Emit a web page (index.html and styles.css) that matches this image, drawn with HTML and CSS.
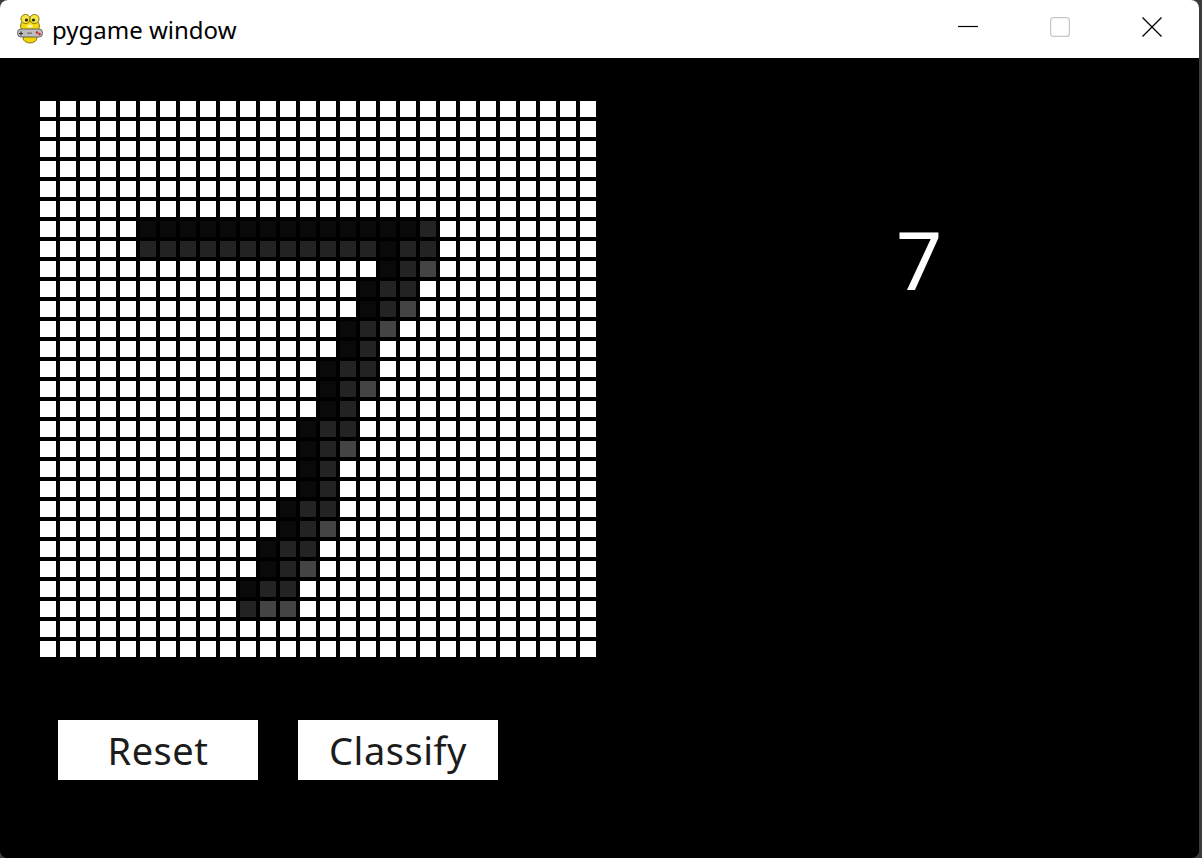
FILE: index.html
```html
<!DOCTYPE html>
<html>
<head>
<meta charset="utf-8">
<title>pygame window</title>
<link rel="stylesheet" href="styles.css">
</head>
<body>
<div class="window">
  <div class="titlebar">
    <svg class="app-icon" width="28" height="32" viewBox="0 0 28 32">
      <ellipse cx="14" cy="26" rx="7" ry="5" fill="#f2d400" stroke="#6b5a00" stroke-width="0.8"/>
      <ellipse cx="14" cy="14" rx="9.5" ry="7.5" fill="#f5da10" stroke="#6b5a00" stroke-width="0.8"/>
      <circle cx="9.5" cy="7" r="4.6" fill="#f8e640" stroke="#6b5a00" stroke-width="0.8"/>
      <circle cx="18.5" cy="7" r="4.6" fill="#f8e640" stroke="#6b5a00" stroke-width="0.8"/>
      <circle cx="10.5" cy="8" r="1.6" fill="#222"/>
      <circle cx="17.5" cy="8" r="1.6" fill="#222"/>
      <ellipse cx="14" cy="14" rx="3" ry="1.6" fill="#fff7a8"/>
      <rect x="1.5" y="17" width="25" height="8" rx="3.5" fill="#bdbdbd" stroke="#4a4a4a" stroke-width="0.8"/>
      <path d="M5 19.5v4M3 21.5h4" stroke="#333" stroke-width="1.2"/>
      <circle cx="21" cy="20.5" r="1.2" fill="#d21e1e"/>
      <circle cx="23.5" cy="22" r="1.2" fill="#d21e1e"/>
      <rect x="11" y="20.5" width="5" height="1.4" fill="#777"/>
    </svg>
    <span class="title">pygame window</span>
    <div class="controls">
      <div class="ctrl">
        <svg width="20" height="20" viewBox="0 0 20 20"><path d="M0 9.5h20" stroke="#000" stroke-width="1.2"/></svg>
      </div>
      <div class="ctrl">
        <svg width="20" height="20" viewBox="0 0 20 20"><rect x="0.6" y="0.6" width="18.8" height="18.8" rx="3" fill="none" stroke="#c6c6c6" stroke-width="1.2"/></svg>
      </div>
      <div class="ctrl">
        <svg width="20" height="20" viewBox="0 0 20 20"><path d="M0.5 0.5L19.5 19.5M19.5 0.5L0.5 19.5" stroke="#000" stroke-width="1.3"/></svg>
      </div>
    </div>
  </div>
  <div class="client">
    <div class="left">
      <div class="grid" id="grid"></div>
      <div class="buttons">
        <div class="btn">Reset</div>
        <div class="btn">Classify</div>
      </div>
    </div>
    <div class="result">7</div>
  </div>
</div>
<script src="script.js"></script>
</body>
</html>
```
FILE: styles.css
```css
html, body {
  margin: 0;
  padding: 0;
}
body {
  background: #3a3a3a;
  width: 1202px;
  height: 858px;
  overflow: hidden;
}
.window {
  width: 1199px;
  height: 858px;
  border-radius: 8px;
  overflow: hidden;
  background: #000;
  display: flex;
  flex-direction: column;
}
.titlebar {
  height: 58px;
  flex: none;
  background: #fff;
  display: flex;
  align-items: center;
}
.app-icon {
  margin-left: 16px;
  margin-top: -2px;
  flex: none;
}
.title {
  margin-left: 8px;
  font-family: "Noto Sans", "Open Sans", sans-serif;
  font-size: 24px;
  color: #000;
  line-height: normal;
}
.controls {
  margin-left: auto;
  display: flex;
  align-self: flex-start;
  margin-right: 1px;
}
.ctrl {
  width: 92px;
  height: 54px;
  display: flex;
  align-items: center;
  justify-content: center;
}
.ctrl svg {
  display: block;
}
.client {
  flex: 1;
  background: #000;
  display: flex;
  padding: 43px 0 0 40px;
}
.left {
  display: flex;
  flex-direction: column;
}
.grid {
  display: grid;
  grid-template-columns: repeat(28, 16px);
  grid-auto-rows: 16px;
  gap: 4px;
}
.cell {
  background: #fff;
}
.cell.l1 { background: #090909; }
.cell.l2 { background: #232323; }
.cell.l3 { background: #444444; }
.buttons {
  display: flex;
  gap: 40px;
  margin-top: 63px;
  padding-left: 18px;
}
.btn {
  width: 200px;
  height: 60px;
  background: #fff;
  display: flex;
  align-items: center;
  justify-content: center;
  font-family: "Noto Sans", "Open Sans", sans-serif;
  font-size: 38px;
  letter-spacing: 0.5px;
  color: #1c1c1c;
}
.result {
  margin-left: 300px;
  margin-top: 118px;
  align-self: flex-start;
  font-family: "Noto Sans", "Open Sans", sans-serif;
  font-size: 81px;
  line-height: 80px;
  color: #fff;
}
```
FILE: script.js
```js
(function () {
  function row(start, pattern) {
    if (start === undefined) return '0'.repeat(28);
    return '0'.repeat(start) + pattern + '0'.repeat(28 - start - pattern.length);
  }
  var rows = [
    row(), row(), row(), row(), row(), row(),
    row(5, '111111111111112'),
    row(5, '222222222222122'),
    row(17, '123'),
    row(16, '122'),
    row(16, '123'),
    row(15, '123'),
    row(15, '12'),
    row(14, '122'),
    row(14, '123'),
    row(14, '12'),
    row(13, '122'),
    row(13, '123'),
    row(13, '12'),
    row(13, '12'),
    row(12, '122'),
    row(12, '123'),
    row(11, '122'),
    row(11, '123'),
    row(10, '122'),
    row(10, '233'),
    row(), row()
  ];
  var grid = document.getElementById('grid');
  var frag = document.createDocumentFragment();
  rows.forEach(function (r) {
    for (var i = 0; i < 28; i++) {
      var d = document.createElement('div');
      var v = r.charAt(i);
      d.className = 'cell' + (v !== '0' ? ' l' + v : '');
      frag.appendChild(d);
    }
  });
  grid.appendChild(frag);
})();
```
